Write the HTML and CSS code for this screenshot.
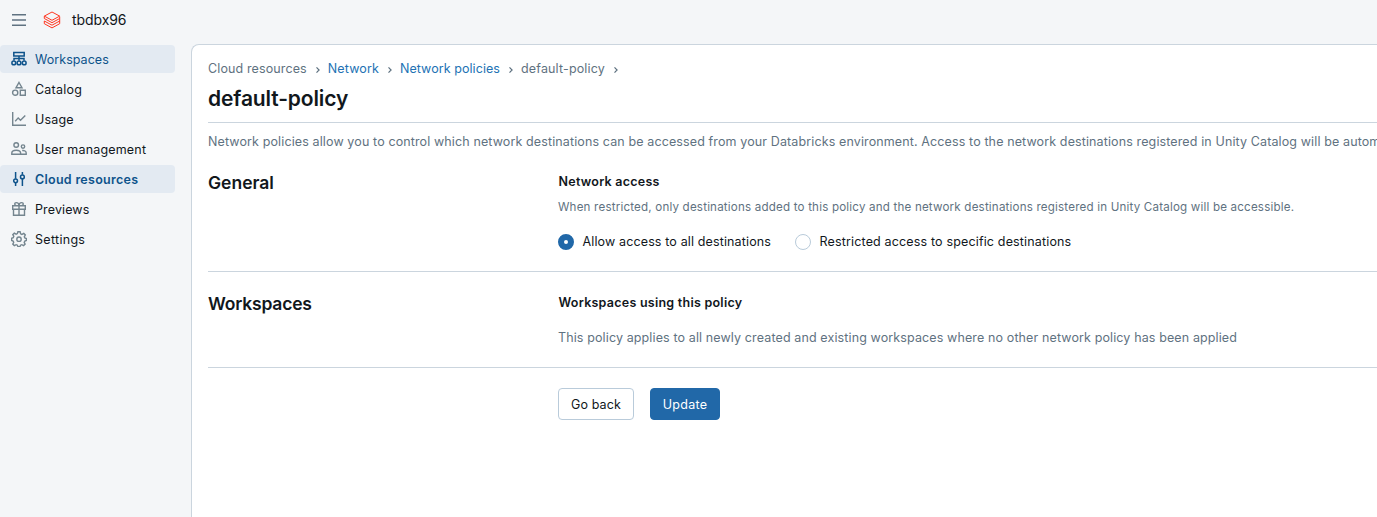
FILE: index.html
```html
<!DOCTYPE html>
<html lang="en">
<head>
<meta charset="utf-8">
<title>default-policy</title>
<link rel="stylesheet" href="styles.css">
</head>
<body>
<header class="topbar">
  <svg class="menu" width="16" height="16" viewBox="0 0 16 16"><path d="M1 2.700h14M1 8h14M1 13.300h14"/></svg>
  <svg class="logo" width="18" height="18" viewBox="0 0 18 18"><path d="M1.300 5.100 9 1l7.700 4.100L9 9.300zM1.300 5.100v2.400L9 11.700l7.700-4.200V10L9 14.200 1.300 10v2.700L9 16.900l7.700-4.200V10M16.700 7.500V5.600"/></svg>
  <span class="account">tbdbx96</span>
</header>
<div class="shell">
  <nav class="sidebar">
    <a class="item active"><svg class="icon bold" width="16" height="16" viewBox="0 0 16 16"><path d="M2.800 1.600h10.400v3.500H2.800zM8 5.100v4.500M3 9.600V7.500h10v2.100"/><circle cx="2.800" cy="11.900" r="1.900"/><circle cx="8" cy="11.900" r="1.900"/><circle cx="13.200" cy="11.900" r="1.900"/></svg><span class="t-workspaces">Workspaces</span></a>
    <a class="item"><svg class="icon" width="16" height="16" viewBox="0 0 16 16"><path d="M8 1.500 11 6.700H5zM9.300 9.200h5v5h-5z"/><circle cx="4.200" cy="11.700" r="2.600"/></svg><span class="t-catalog">Catalog</span></a>
    <a class="item"><svg class="icon" width="16" height="16" viewBox="0 0 16 16"><path d="M1.700 1v13.300H15M4.200 10.200l3-3.300 2.300 2.300 4.800-4.800"/></svg><span class="t-usage">Usage</span></a>
    <a class="item"><svg class="icon" width="16" height="16" viewBox="0 0 16 16"><circle cx="5.200" cy="4" r="2.300"/><circle cx="12" cy="5.600" r="1.700"/><path d="M.8 13.300v-1.200C.8 10.300 3 9.200 5.200 9.200s4.400 1.100 4.400 2.900v1.200zM11.200 9.500c2.200-.3 4 .8 4 2.500v1.300H9.600"/></svg><span class="t-users">User management</span></a>
    <a class="item active current"><svg class="icon bold" width="16" height="16" viewBox="0 0 16 16"><path d="M4.600 1v6.700M4.600 11.900V15M11.400 1v2.800M11.400 8v7"/><circle cx="4.600" cy="9.800" r="1.900"/><circle cx="11.400" cy="5.900" r="1.900"/></svg><span class="t-cloud">Cloud resources</span></a>
    <a class="item"><svg class="icon" width="16" height="16" viewBox="0 0 16 16"><path d="M1.700 4.700h12.600v3.600H1.700zM2.500 8.300v6h11v-6M8 4.700v9.600M8 4.700H5.600C3.200 4.700 3.200 1.600 5.300 1.600 7.200 1.600 8 3 8 4.700zM8 4.700h2.400c2.400 0 2.400-3.100.3-3.100C8.800 1.600 8 3 8 4.700z"/></svg><span class="t-previews">Previews</span></a>
    <a class="item"><svg class="icon" width="16" height="16" viewBox="0 0 16 16"><path d="M6.900.8h2.200l.5 2 1.300.6 1.900-1 1.500 1.500-1 1.900.5 1.200 1.600.5v1.900l-1.600.7-.6 1.300.9 1.700-1.500 1.500-1.800-.9-1.300.5-.6 1.600H7l-.6-1.600-1.300-.5-1.800.9-1.500-1.500.9-1.800-.6-1.300-1.500-.6V7.300l1.600-.6.6-1.300-1-1.700 1.500-1.500 1.800 1 1.300-.6z"/><circle cx="8" cy="8.200" r="2.200"/></svg><span class="t-settings">Settings</span></a>
  </nav>
  <main class="panel">
    <div class="crumbs">
      <span class="c1">Cloud resources</span><svg class="chev" width="6" height="8" viewBox="0 0 6 8"><path d="m1.500 1.300 2.600 2.700-2.600 2.700"/></svg>
      <a class="c2">Network</a><svg class="chev" width="6" height="8" viewBox="0 0 6 8"><path d="m1.500 1.300 2.600 2.700-2.600 2.700"/></svg>
      <a class="c3">Network policies</a><svg class="chev" width="6" height="8" viewBox="0 0 6 8"><path d="m1.500 1.300 2.600 2.700-2.600 2.700"/></svg>
      <span class="c4">default-policy</span><svg class="chev" width="6" height="8" viewBox="0 0 6 8"><path d="m1.500 1.300 2.600 2.700-2.600 2.700"/></svg>
    </div>
    <h1>default-policy</h1>
    <p class="intro">Network policies allow you to control which network destinations can be accessed from your Databricks environment. Access to the network destinations registered in Unity Catalog will be automatically allowed.</p>
    <section class="general">
      <h2 class="h-general">General</h2>
      <div class="body">
        <h3 class="h-access">Network access</h3>
        <p class="hint">When restricted, only destinations added to this policy and the network destinations registered in Unity Catalog will be accessible.</p>
        <div class="radios">
          <label class="option"><span class="radio on"></span><span class="t-allow">Allow access to all destinations</span></label>
          <label class="option"><span class="radio"></span><span class="t-restrict">Restricted access to specific destinations</span></label>
        </div>
      </div>
    </section>
    <section class="usedby">
      <h2 class="h-workspaces">Workspaces</h2>
      <div class="body">
        <h3 class="h-using">Workspaces using this policy</h3>
        <p class="note">This policy applies to all newly created and existing workspaces where no other network policy has been applied</p>
      </div>
    </section>
    <div class="actions">
      <button class="btn back">Go back</button>
      <button class="btn primary">Update</button>
    </div>
  </main>
</div>
</body>
</html>
```
FILE: styles.css
```css
* { box-sizing: border-box; }
body {
  margin: 0;
  height: 517px;
  overflow: hidden;
  background: #f4f6f8;
  color: #11171c;
  font: 12.5px/20px Inter, "Liberation Sans", sans-serif;
  letter-spacing: 0.12px;
  white-space: nowrap;
}
h1, h2, h3, p { margin: 0; font-weight: 600; }
p { font-weight: 400; color: #5f7281; }
svg { flex: none; fill: none; }

.topbar { display: flex; align-items: center; height: 44px; padding: 0 0 4px 11px; }
.menu { stroke: #5f7281; stroke-width: 1.400; }
.logo { margin: 0 11px 0 16px; stroke: #ff3621; stroke-width: 1; }
.account { font-size: 14px; letter-spacing: -0.08px; }

.shell { display: flex; height: 473px; }
.sidebar { display: flex; flex-direction: column; gap: 2px; flex: none; width: 191px; padding-top: 1px; }
.item { display: flex; align-items: center; gap: 8px; width: 175px; height: 28px; padding-left: 11px; border-radius: 4px; }
.item span { padding-top: 1px; }
.icon { stroke: #74858f; stroke-width: 1.400; }
.bold { stroke: #0e538b; stroke-width: 1.500; }
.active { background: #e3eaf2; color: #0e538b; }
.current { font-weight: 600; }
.t-workspaces { letter-spacing: 0.05px; }
.t-catalog { letter-spacing: 0.22px; }
.t-cloud { letter-spacing: 0.28px; }
.t-usage, .t-users { letter-spacing: 0.18px; }
.t-settings { letter-spacing: 0.3px; }

.panel {
  flex: 1;
  min-width: 0;
  height: 481px;
  padding: 14px 0 0 16px;
  overflow: hidden;
  background: #fff;
  border: 1px solid #cbd5de;
  border-right: 0;
  border-radius: 8px 0 0 0;
}
.crumbs { display: flex; align-items: center; color: #5f7281; }
.crumbs a { color: #2272b4; }
.c3 { letter-spacing: 0.07px; }
.c4 { letter-spacing: 0.16px; }
.chev { margin: 1px 7px 0 8px; stroke: #5f7281; stroke-width: 1.200; }
h1 { height: 44px; padding-top: 6px; border-bottom: 1px solid #cbd5de; font-size: 21px; line-height: 28px; letter-spacing: -0.13px; }
.intro { margin-top: 9px; }
section { display: flex; border-bottom: 1px solid #cbd5de; }
.general { height: 120px; padding-top: 19px; }
.usedby { height: 96px; padding-top: 20px; }
h2 { flex: none; width: 350px; font-size: 17.5px; line-height: 24px; letter-spacing: -0.2px; }
.h-general { letter-spacing: 0; }
h3 { padding: 1px 0 0 0.5px; font-size: 12.5px; letter-spacing: 0.25px; }
.hint { margin-top: 5px; font-size: 11.6px; letter-spacing: 0.185px; }
.radios { display: flex; gap: 24px; margin-top: 15px; }
.option { display: flex; align-items: center; gap: 8.5px; }
.t-allow { letter-spacing: 0.135px; }
.t-restrict { letter-spacing: 0.155px; }
.radio { width: 16px; height: 16px; border: 1px solid #b9cbda; border-radius: 50%; }
.radio.on { border: 6px solid #2168a8; }
.note { margin-top: 15px; }
.actions { display: flex; gap: 16px; padding: 20px 0 0 350px; }
.btn { height: 32px; padding: 1px 0 0; border: 1px solid #b9cbda; border-radius: 4px; background: #fff; color: #11171c; font: inherit; letter-spacing: inherit; }
.back { width: 76px; }
.primary { width: 70px; border-color: #2168a8; background: #2168a8; color: #fff; letter-spacing: 0.25px; }
```
